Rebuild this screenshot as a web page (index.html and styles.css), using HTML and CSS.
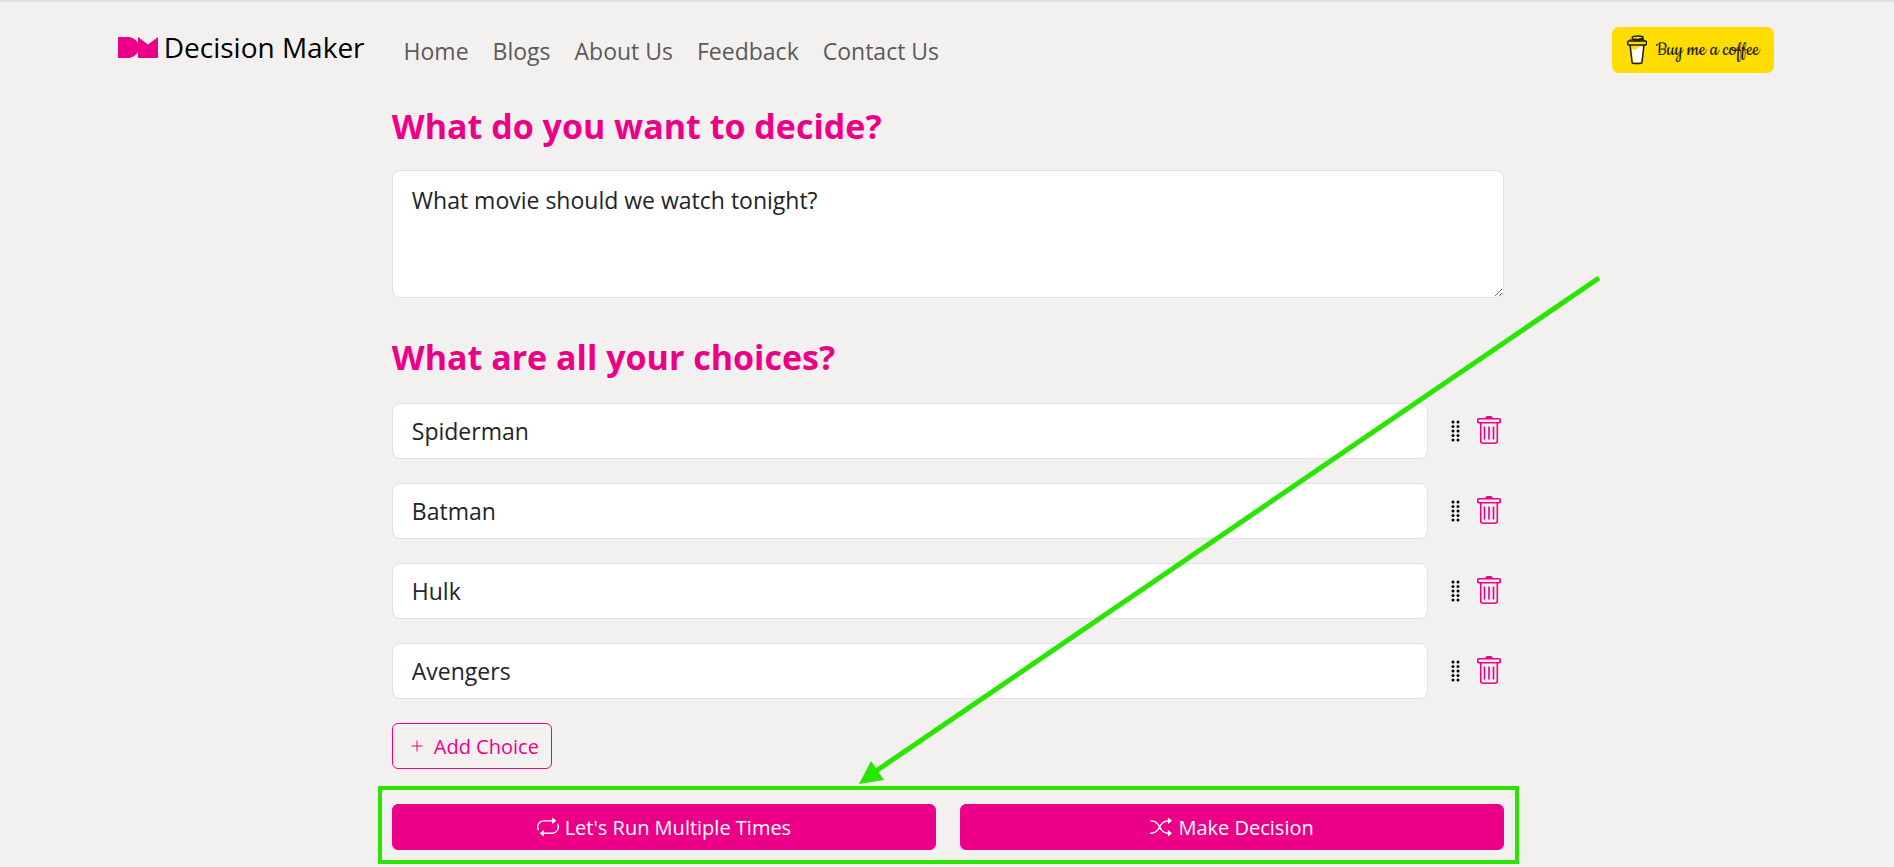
FILE: index.html
```html
<!DOCTYPE html>
<html lang="en">
<head>
    <meta charset="UTF-8">
    <meta name="viewport" content="width=device-width, initial-scale=1.0">
    <title>Decision Maker</title>
    <link rel="stylesheet" href="styles.css">
</head>
<body>

    <!-- icons used more than once -->
    <svg class="sprite" aria-hidden="true">
        <symbol id="grip" viewBox="0 0 10 22">
            <circle cx="2" cy="2" r="1.5"/><circle cx="7" cy="2" r="1.5"/>
            <circle cx="2" cy="6.5" r="1.5"/><circle cx="7" cy="6.5" r="1.5"/>
            <circle cx="2" cy="11" r="1.5"/><circle cx="7" cy="11" r="1.5"/>
            <circle cx="2" cy="15.5" r="1.5"/><circle cx="7" cy="15.5" r="1.5"/>
            <circle cx="2" cy="20" r="1.5"/><circle cx="7" cy="20" r="1.5"/>
        </symbol>
        <symbol id="trash" viewBox="0 0 24 28">
            <path d="M8 2.500Q8.500 0 10 0h4q1.500 0 2 2.500z" fill="currentColor"/>
            <rect x=".8" y="2.8" width="22.4" height="4" rx=".8" fill="none" stroke="currentColor" stroke-width="1.6"/>
            <path d="M3.700 6.700v18q0 2.500 2.600 2.500h11.400q2.600 0 2.600-2.500v-18M7.500 10.500v13M12 10.500v13M16.500 10.500v13" fill="none" stroke="currentColor" stroke-width="1.6"/>
        </symbol>
    </svg>

    <nav class="navbar">
        <a class="brand" href="#">
            <svg class="logo" viewBox="0 0 40 21" aria-hidden="true">
                <path d="M0 0h11q6 1 9 6V0l10 7.500L40 0v21H20v-6q-3 5-9 6H0z"/>
            </svg>
            Decision Maker
        </a>
        <div class="nav-links">
            <a href="#">Home</a>
            <a href="#">Blogs</a>
            <a href="#">About Us</a>
            <a href="#">Feedback</a>
            <a href="#">Contact Us</a>
        </div>
        <a class="coffee" href="#">
            <svg viewBox="0 0 20 30" aria-hidden="true">
                <path class="milk" d="M5 14q4 2 6-1t5-1l-1 15H6z"/>
                <path class="cup" d="M3 10l2 17q0 1.500 2 1.500h6q2 0 2-1.500l2-17M2 6h16q1.500 0 1.500 2t-1.500 2H2Q.6 10 .6 8T2 6zM3 6l1-2M17 6l-1-2q-5 1-11 0M5 3q0-2 6-2 5 0 5 1.500T12 4"/>
            </svg>
            Buy me a coffee
        </a>
    </nav>

    <main>
        <h1><label for="question">What do you want to decide?</label></h1>
        <textarea id="question" class="field">What movie should we watch tonight?</textarea>

        <h2>What are all your choices?</h2>
        <div class="choices">
            <div class="choice">
                <input type="text" class="field" aria-label="Choice 1" value="Spiderman">
                <svg class="grip"><use href="#grip"/></svg>
                <button class="delete" aria-label="Delete choice 1"><svg><use href="#trash"/></svg></button>
            </div>
            <div class="choice">
                <input type="text" class="field" aria-label="Choice 2" value="Batman">
                <svg class="grip"><use href="#grip"/></svg>
                <button class="delete" aria-label="Delete choice 2"><svg><use href="#trash"/></svg></button>
            </div>
            <div class="choice">
                <input type="text" class="field" aria-label="Choice 3" value="Hulk">
                <svg class="grip"><use href="#grip"/></svg>
                <button class="delete" aria-label="Delete choice 3"><svg><use href="#trash"/></svg></button>
            </div>
            <div class="choice">
                <input type="text" class="field" aria-label="Choice 4" value="Avengers">
                <svg class="grip"><use href="#grip"/></svg>
                <button class="delete" aria-label="Delete choice 4"><svg><use href="#trash"/></svg></button>
            </div>
        </div>

        <button class="btn btn-outline">
            <svg class="plus" viewBox="0 0 12 12" aria-hidden="true"><path d="M6 .5v11M.5 6h11"/></svg>
            Add Choice
        </button>

        <div class="actions">
            <button class="btn btn-main">
                <svg class="icon" viewBox="0 0 16 16" aria-hidden="true">
                    <path d="M11 5.466V4H5a4 4 0 0 0-3.584 5.777.5.5 0 1 1-.896.446A5 5 0 0 1 5 3h6V1.534a.25.25 0 0 1 .41-.192l2.36 1.966c.12.1.12.284 0 .384l-2.36 1.966a.25.25 0 0 1-.41-.192Zm3.81.086a.5.5 0 0 1 .67.225A5 5 0 0 1 11 13H5v1.466a.25.25 0 0 1-.41.192l-2.36-1.966a.25.25 0 0 1 0-.384l2.36-1.966a.25.25 0 0 1 .41.192V12h6a4 4 0 0 0 3.585-5.777.5.5 0 0 1 .225-.67Z"/>
                </svg>
                Let's Run Multiple Times
            </button>
            <button class="btn btn-main">
                <svg class="icon" viewBox="0 0 16 16" aria-hidden="true">
                    <path d="M0 3.5A.5.5 0 0 1 .5 3H1c2.202 0 3.827 1.24 4.874 2.418.49.552.865 1.102 1.126 1.532.26-.43.636-.98 1.126-1.532C9.173 4.24 10.798 3 13 3v1c-1.798 0-3.173 1.01-4.126 2.082A9.624 9.624 0 0 0 7.556 8a9.624 9.624 0 0 0 1.317 1.918C9.828 10.99 11.204 12 13 12v1c-2.202 0-3.827-1.24-4.874-2.418A10.595 10.595 0 0 1 7 9.05c-.26.43-.636.98-1.126 1.532C4.827 11.76 3.202 13 1 13H.5a.5.5 0 0 1 0-1H1c1.798 0 3.173-1.01 4.126-2.082A9.624 9.624 0 0 0 6.444 8a9.624 9.624 0 0 0-1.317-1.918C4.172 4.99 2.796 4 1 4H.5a.5.5 0 0 1-.5-.5z"/>
                    <path d="M13 5.466V1.534a.25.25 0 0 1 .41-.192l2.36 1.966c.12.1.12.284 0 .384l-2.36 1.966a.25.25 0 0 1-.41-.192zm0 9v-3.932a.25.25 0 0 1 .41-.192l2.36 1.966c.12.1.12.284 0 .384l-2.36 1.966a.25.25 0 0 1-.41-.192z"/>
                </svg>
                Make Decision
            </button>
            <!-- arrow pointing at the two buttons -->
            <svg class="arrow" viewBox="0 0 742 508" aria-hidden="true">
                <path class="shaft" d="M740 2 17 495"/>
                <path class="head" d="M0 508l12-23 13 19z"/>
            </svg>
        </div>
    </main>

</body>
</html>
```
FILE: styles.css
```css
*, *::after, *::before{
    margin: 0;
    padding: 0;
    box-sizing: border-box;
}
:root{
    --pink: #ed0088;
    --bg: #f3f1f0;
    --text: #212529;
    --green: #28e600;
}

body{
    min-height: 100vh;
    background-color: var(--bg);
    border-top: 2px solid #dee2e2;
    color: var(--text);
    font-family: 'Segoe UI', 'Open Sans', sans-serif;
    font-size: 23px;
    line-height: 36px;
}
.sprite{
    position: absolute;
    width: 0;
    height: 0;
}

/* navbar */
.navbar{
    width: 90%;
    margin: 0 auto;
    padding: 25px 25px 0 23px;
    display: flex;
    align-items: center;
}
.brand{
    display: flex;
    align-items: center;
    gap: 6px;
    padding-bottom: 6px;
    color: black;
    font-size: 28px;
    text-decoration: none;
}
.logo{
    width: 40px;
    height: 21px;
    fill: var(--pink);
}
.nav-links{
    display: flex;
    gap: 24px;
    margin-left: 39px;
    padding-top: 2px;
}
.nav-links a{
    color: #5b5a5a;
    text-decoration: none;
}
.coffee{
    display: flex;
    align-items: center;
    gap: 9px;
    margin-left: auto;
    padding: 0 15px;
    height: 46px;
    border-radius: 7px;
    background-color: #ffdd00;
    color: #1d1d1b;
    font-family: 'Cookie', 'Lato', cursive;
    font-size: 22px;
    text-decoration: none;
}
.coffee svg{
    width: 20px;
    height: 30px;
}
.cup{
    fill: none;
    stroke: #1d1d1b;
    stroke-width: 1.5;
}
.milk{
    fill: white;
}

/* form */
main{
    width: 60%;
    margin: 0 auto;
    padding: 31px 11px 18px 13px;
}
h1, h2{
    color: var(--pink);
    font-size: 34px;
    font-weight: bold;
    line-height: 44px;
}
h1{
    margin-bottom: 22px;
}
h2{
    margin: 37px 0 24px;
}
.field{
    display: block;
    width: 100%;
    padding: 9px 19px;
    border: 1px solid #dee2e6;
    border-radius: 8px;
    background-color: white;
    color: var(--text);
    font: inherit;
}
textarea.field{
    height: 128px;
    padding: 11px 19px;
    resize: vertical;
}
.choices{
    display: flex;
    flex-direction: column;
    gap: 24px;
    margin-bottom: 24px;
}
.choice{
    display: flex;
    align-items: center;
}
.choice .field{
    flex: 1;
}
.grip{
    width: 10px;
    height: 22px;
    margin: 0 16px 0 23px;
    cursor: grab;
}
.delete{
    width: 27px;
    padding-bottom: 2px;
    border: none;
    background: none;
    color: var(--pink);
    cursor: pointer;
}
.delete svg{
    display: block;
    width: 24px;
    height: 28px;
}

/* buttons */
.btn{
    display: flex;
    align-items: center;
    justify-content: center;
    gap: 6px;
    height: 46px;
    border: 1px solid var(--pink);
    border-radius: 6px;
    font-family: inherit;
    font-size: 20px;
    cursor: pointer;
}
.btn-outline{
    gap: 11px;
    padding: 0 12px 0 18px;
    background-color: transparent;
    color: var(--pink);
}
.btn-main{
    flex: 1;
    background-color: var(--pink);
    color: white;
}
.plus{
    width: 12px;
    height: 12px;
    stroke: currentColor;
}
.icon{
    width: 22px;
    height: 22px;
    fill: currentColor;
}
.actions{
    position: relative;
    display: flex;
    gap: 24px;
    margin-top: 35px;
}

/* green highlight */
.actions::after{
    content: "";
    position: absolute;
    inset: -18px -15px -14px -14px;
    border: 4px solid var(--green);
    pointer-events: none;
}
.arrow{
    position: absolute;
    right: -97px;
    bottom: 66px;
    width: 742px;
    height: 508px;
    pointer-events: none;
}
.shaft{
    stroke: var(--green);
    stroke-width: 5;
}
.head{
    fill: var(--green);
}
```
